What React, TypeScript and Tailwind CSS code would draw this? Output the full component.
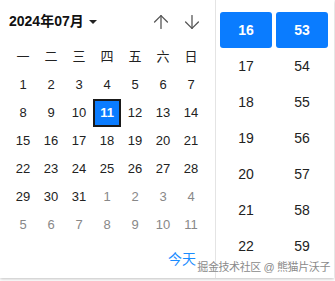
import React from "react";
import { ArrowUp, ArrowDown } from "lucide-react";

const weekdays = ["一", "二", "三", "四", "五", "六", "日"];

type Cell = { day: number; current: boolean };

const buildCells = (): Cell[] => {
    const cells: Cell[] = [];
    for (let d = 1; d <= 31; d++) cells.push({ day: d, current: true });
    for (let d = 1; d <= 11; d++) cells.push({ day: d, current: false });
    return cells;
};

const hours = [16, 17, 18, 19, 20, 21, 22];
const minutes = [53, 54, 55, 56, 57, 58, 59];

const TimeColumn: React.FC<{ values: number[]; selected: number }> = ({ values, selected }) => (
    <div className="flex w-[52px] flex-col">
        {values.map((v) => (
            <div
                key={v}
                className={`flex h-9 items-center justify-center text-[14px] ${
                    v === selected ? "rounded-[3px] bg-[#0a7cff] font-bold text-white" : "text-[#222]"
                }`}
            >
                {v}
            </div>
        ))}
    </div>
);

export default function App() {
    const cells = buildCells();
    const selectedDay = 11;

    return (
        <div
            className="relative h-[281px] w-[335px] bg-white"
            style={{ fontFamily: '"Liberation Sans", Arial, "Noto Sans CJK SC", sans-serif' }}
        >
            <div className="flex h-[278px] w-[334px] overflow-hidden bg-white shadow-[0_1px_3px_rgba(0,0,0,0.25)]">
                {/* date side */}
                <div className="flex w-[216px] flex-col border-r border-[#e4e4e4] pl-[9px]">
                    <div className="flex h-[43px] items-center">
                        <span className="text-[14px] font-bold text-[#111]">2024年07月</span>
                        <span className="ml-[5px] mt-[1px] h-0 w-0 border-x-[4px] border-t-[4px] border-x-transparent border-t-[#222]"></span>
                        <div className="ml-auto mr-[12px] flex items-center gap-[9px] text-[#555]">
                            <ArrowUp size={22} strokeWidth={1.4} />
                            <ArrowDown size={22} strokeWidth={1.4} />
                        </div>
                    </div>

                    <div className="grid w-[196px] grid-cols-7">
                        {weekdays.map((w) => (
                            <div key={w} className="flex h-7 items-center justify-center text-[13px] text-[#222]">
                                {w}
                            </div>
                        ))}
                        {cells.map((c, i) => {
                            const sel = c.current && c.day === selectedDay;
                            return (
                                <div key={i} className="flex h-7 items-center justify-center">
                                    <div
                                        className={`flex h-7 w-7 items-center justify-center text-[13px] ${
                                            sel
                                                ? "border-2 border-[#1a1a1a] bg-[#0a7cff] font-bold text-white"
                                                : c.current
                                                  ? "text-[#222]"
                                                  : "text-[#888]"
                                        }`}
                                    >
                                        {c.day}
                                    </div>
                                </div>
                            );
                        })}
                    </div>

                    <div className="mt-[10px] flex w-[187px] justify-end">
                        <span className="text-[14px] leading-5 text-[#1a8cff]">今天</span>
                    </div>
                </div>

                {/* time side */}
                <div className="flex gap-1 pl-[4px] pt-3">
                    <TimeColumn values={hours} selected={16} />
                    <TimeColumn values={minutes} selected={53} />
                </div>
            </div>

            <span className="absolute bottom-[6px] right-[5px] text-[11px] leading-4 tracking-[-0.4px] text-[#8a8a8a] [text-shadow:0_0_2px_#fff]">
                掘金技术社区 @ 熊猫片沃子
            </span>
        </div>
    );
}
